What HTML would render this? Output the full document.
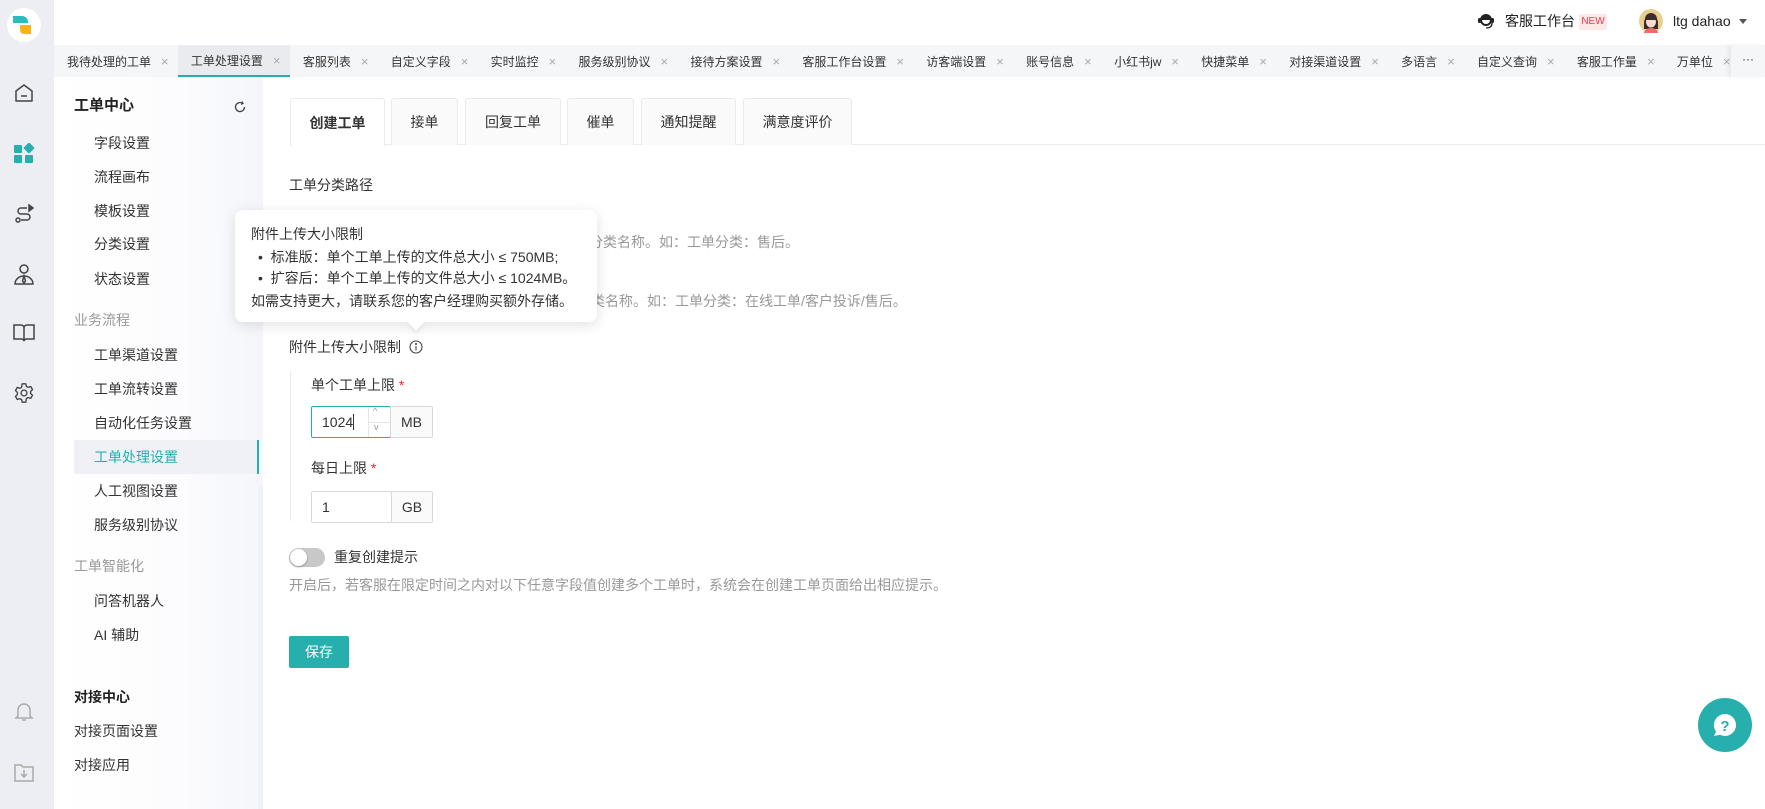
<!DOCTYPE html>
<html><head><meta charset="utf-8">
<style>
*{margin:0;padding:0;box-sizing:border-box}
body{width:1765px;height:809px;overflow:hidden;background:#fff;font-family:"Liberation Sans","Noto Sans CJK SC",sans-serif;color:#333;position:relative;font-size:14px}
.abs{position:absolute}
.rail{left:0;top:0;width:54px;height:809px;background:#eceef3}
.tabbar{left:54px;top:45px;width:1711px;height:32px;background:#f5f6f8;display:flex;align-items:center;font-size:12px;color:#333;white-space:nowrap}
.tb{height:32px;display:flex;align-items:center;padding:0 9.3px 0 13px}
.tb i{font-style:normal;color:#aaa;margin-left:10px;font-size:13px}
.tb.act{background:#eaebef;border-bottom:2px solid #26afad}
.side{left:54px;top:77px;width:209px;height:732px;background:linear-gradient(90deg,#fff 0%,#fcfcfe 60%,#f4f6fb 100%)}
.si{position:absolute;left:94px;font-size:14px;color:#333;line-height:20px}
.sg{position:absolute;left:74px;font-size:14px;color:#999;line-height:20px}
.ctab{position:absolute;top:98px;height:47px;border:1px solid #ebebeb;border-bottom:none;background:#fafafa;display:flex;align-items:center;justify-content:center;font-size:14px;color:#333;border-radius:3px 3px 0 0}
.t{position:absolute;line-height:20px;white-space:nowrap}
.g{color:#999}
.inp{position:absolute;height:32px;border:1px solid #d9d9d9;border-radius:2px;font-size:14px}
</style></head><body>
<div class="abs rail"></div>
<div class="abs" style="left:7px;top:8px;width:34px;height:34px;border-radius:50%;background:#fff"></div>
<svg class="abs" style="left:13px;top:16px" width="22" height="18" viewBox="0 0 22 18"><path d="M0 0h9a6 6 0 0 1 6 6v1H0z" fill="#2bbcc0"/><path d="M7 9h11v9h-7a4 4 0 0 1-4-4z" fill="#f9b21a"/></svg>
<svg class="abs" style="left:13px;top:82px" width="22" height="22" viewBox="0 0 22 22" fill="none" stroke="#444" stroke-width="1.5"><path d="M3 9l8-6 8 6v10H3z" stroke-linejoin="round"/><path d="M8 14h6"/></svg>
<svg class="abs" style="left:14px;top:143px" width="21" height="21" viewBox="0 0 21 21" fill="#26afad"><rect x="0" y="2" width="8" height="8" rx="1"/><rect x="11" y="1" width="8" height="8" rx="1" transform="rotate(45 15 5)"/><rect x="0" y="12" width="8" height="8" rx="1"/><rect x="11" y="12" width="8" height="8" rx="1"/></svg>
<svg class="abs" style="left:13px;top:203px" width="22" height="22" viewBox="0 0 22 22" fill="none" stroke="#444" stroke-width="1.5"><path d="M14 5H8a3 3 0 0 0 0 6h6a3 3 0 0 1 0 6H8"/><circle cx="5" cy="17" r="2"/><path d="M16 2l4 3-4 3z" fill="#444"/></svg>
<svg class="abs" style="left:13px;top:263px" width="22" height="24" viewBox="0 0 22 24" fill="none" stroke="#444" stroke-width="1.5"><circle cx="11" cy="6" r="4"/><path d="M2 21a9 8 0 0 1 18 0z"/><path d="M11 13l-1.5 5 1.5 2 1.5-2z"/></svg>
<svg class="abs" style="left:13px;top:323px" width="22" height="20" viewBox="0 0 22 20" fill="none" stroke="#444" stroke-width="1.5"><path d="M1 2h7a3 3 0 0 1 3 3v13a3 3 0 0 0-3-2H1zM21 2h-7a3 3 0 0 0-3 3v13a3 3 0 0 1 3-2h7z"/></svg>
<svg class="abs" style="left:13px;top:382px" width="22" height="22" viewBox="0 0 24 24" fill="none" stroke="#444" stroke-width="1.5"><circle cx="12" cy="12" r="3.2"/><path d="M10 2h4l.6 2.8 2 1.1 2.7-1 2 3.4-2.1 1.9v2.4l2.1 1.9-2 3.4-2.7-1-2 1.1L14 22h-4l-.6-2.8-2-1.1-2.7 1-2-3.4 2.1-1.9v-2.4L2.7 9.3l2-3.4 2.7 1 2-1.1z" stroke-linejoin="round"/></svg>
<svg class="abs" style="left:13px;top:700px" width="22" height="22" viewBox="0 0 22 22" fill="none" stroke="#aaa" stroke-width="1.5"><path d="M5 16V10a6 6 0 0 1 12 0v6l2 2H3z"/><path d="M9 20h4"/></svg>
<svg class="abs" style="left:13px;top:761px" width="22" height="22" viewBox="0 0 22 22" fill="none" stroke="#aaa" stroke-width="1.5"><path d="M2 4h6l2 2h10v14H2z"/><path d="M11 9v7M8 13l3 3 3-3"/></svg>

<svg class="abs" style="left:1477px;top:11px" width="18" height="19" viewBox="0 0 18 19"><circle cx="9" cy="9" r="6" fill="#222"/><rect x="1" y="7" width="3" height="5" rx="1.5" fill="#222"/><rect x="14" y="7" width="3" height="5" rx="1.5" fill="#222"/><path d="M5 9a4 4 0 0 0 8 0" fill="#fff"/><path d="M15 12c0 4-3 5-6 5" stroke="#222" stroke-width="1.3" fill="none"/></svg>
<div class="t" style="left:1505px;top:11px;font-size:14px;color:#222">客服工作台</div>
<div class="abs" style="left:1579px;top:14px;width:28px;height:16px;background:#fde7e7;color:#f0394a;font-size:10px;line-height:16px;text-align:center;border-radius:2px">NEW</div>
<svg class="abs" style="left:1639px;top:9px" width="24" height="24" viewBox="0 0 24 24"><circle cx="12" cy="12" r="12" fill="#e8cf8e"/><path d="M5 14a7 8 0 0 1 14 0v6H5z" fill="#3a2c2a"/><ellipse cx="12" cy="13" rx="5" ry="5.5" fill="#f6ddd0"/><path d="M6 10a6 6 0 0 1 12 0v1H6z" fill="#3a2c2a"/><path d="M5 24a7 5 0 0 1 14 0z" fill="#f06b6b"/></svg>
<div class="t" style="left:1673px;top:11px;font-size:14px;color:#222">ltg dahao</div>
<div class="abs" style="left:1739px;top:19px;width:0;height:0;border-left:4px solid transparent;border-right:4px solid transparent;border-top:5px solid #555"></div>

<div class="abs tabbar">
<div class="tb">我待处理的工单<i>×</i></div>
<div class="tb act">工单处理设置<i>×</i></div>
<div class="tb">客服列表<i>×</i></div>
<div class="tb">自定义字段<i>×</i></div>
<div class="tb">实时监控<i>×</i></div>
<div class="tb">服务级别协议<i>×</i></div>
<div class="tb">接待方案设置<i>×</i></div>
<div class="tb">客服工作台设置<i>×</i></div>
<div class="tb">访客端设置<i>×</i></div>
<div class="tb">账号信息<i>×</i></div>
<div class="tb">小红书jw<i>×</i></div>
<div class="tb">快捷菜单<i>×</i></div>
<div class="tb">对接渠道设置<i>×</i></div>
<div class="tb">多语言<i>×</i></div>
<div class="tb">自定义查询<i>×</i></div>
<div class="tb">客服工作量<i>×</i></div>
<div class="tb">万单位<i>×</i></div>
</div>
<div class="abs" style="left:1731px;top:45px;width:34px;height:32px;background:#f5f6f8;box-shadow:-3px 0 4px rgba(0,0,0,.06);font-size:12px;line-height:28px;text-align:center;color:#333">···</div>

<div class="abs side"></div>
<div class="abs" style="left:259px;top:486px;width:4px;height:323px;background:#eef1f7"></div>
<div class="t" style="left:74px;top:96px;font-size:15px;font-weight:bold;color:#222">工单中心</div>
<svg class="abs" style="left:234px;top:101px" width="12" height="12" viewBox="0 0 12 12" fill="none" stroke="#444" stroke-width="1.3"><path d="M10.5 6A4.5 4.5 0 1 1 8.5 2.3"/><path d="M8 0.5l1 2-2 .8" /></svg>
<div class="si" style="top:133px">字段设置</div>
<div class="si" style="top:167px">流程画布</div>
<div class="si" style="top:201px">模板设置</div>
<div class="si" style="top:234px">分类设置</div>
<div class="si" style="top:269px">状态设置</div>
<div class="sg" style="top:310px">业务流程</div>
<div class="si" style="top:345px">工单渠道设置</div>
<div class="si" style="top:379px">工单流转设置</div>
<div class="si" style="top:413px">自动化任务设置</div>
<div class="abs" style="left:74px;top:440px;width:185px;height:34px;background:#eff1f6;border-right:2px solid #26afad"></div>
<div class="si" style="top:447px;color:#26afad">工单处理设置</div>
<div class="si" style="top:481px">人工视图设置</div>
<div class="si" style="top:515px">服务级别协议</div>
<div class="sg" style="top:556px">工单智能化</div>
<div class="si" style="top:591px">问答机器人</div>
<div class="si" style="top:625px">AI 辅助</div>
<div class="sg" style="top:687px;color:#222;font-weight:bold">对接中心</div>
<div class="sg" style="top:721px;color:#333">对接页面设置</div>
<div class="sg" style="top:755px;color:#333">对接应用</div>

<div class="abs" style="left:290px;top:144px;width:1475px;height:1px;background:#ebebeb"></div>
<div class="ctab" style="left:290px;width:95px;background:#fff;font-weight:bold;height:48px">创建工单</div>
<div class="ctab" style="left:391px;width:67px">接单</div>
<div class="ctab" style="left:465px;width:96px">回复工单</div>
<div class="ctab" style="left:567px;width:67px">催单</div>
<div class="ctab" style="left:641px;width:95px">通知提醒</div>
<div class="ctab" style="left:743px;width:109px">满意度评价</div>

<div class="t" style="left:289px;top:175px">工单分类路径</div>
<div class="t g" style="left:589px;top:232px">分类名称。如：工单分类：售后。</div>
<div class="t g" style="left:591px;top:291px">类名称。如：工单分类：在线工单/客户投诉/售后。</div>

<div class="t" style="left:289px;top:337px">附件上传大小限制</div>
<svg class="abs" style="left:409px;top:340px" width="14" height="14" viewBox="0 0 14 14" fill="none" stroke="#444" stroke-width="1.1"><circle cx="7" cy="7" r="6"/><path d="M7 6v4.5"/><circle cx="7" cy="4" r=".5" fill="#444"/></svg>
<div class="abs" style="left:290px;top:371px;width:1px;height:150px;background:#ebebeb"></div>
<div class="t" style="left:311px;top:375px">单个工单上限 <span style="color:#f5222d">*</span></div>
<div class="inp" style="left:311px;top:406px;width:80px;border-color:#26afad"></div>
<div class="t" style="left:322px;top:412px">1024<span style="display:inline-block;width:1px;height:16px;background:#333;vertical-align:-3px"></span></div>
<div class="abs" style="left:368px;top:407px;width:22px;height:30px;border-left:1px solid #e5e5e5"></div>
<div class="abs" style="left:368px;top:422px;width:22px;height:1px;background:#e5e5e5"></div>
<div class="abs" style="left:373px;top:406px;font-size:9px;color:#999">^</div>
<div class="abs" style="left:374px;top:422px;font-size:9px;color:#999">v</div>
<div class="inp" style="left:390px;top:406px;width:43px;background:#fafafa;text-align:center;line-height:30px">MB</div>
<div class="t" style="left:311px;top:458px">每日上限 <span style="color:#f5222d">*</span></div>
<div class="inp" style="left:311px;top:491px;width:81px;padding-left:10px;line-height:30px">1</div>
<div class="inp" style="left:391px;top:491px;width:42px;background:#fafafa;text-align:center;line-height:30px">GB</div>

<div class="abs" style="left:289px;top:548px;width:36px;height:19px;border-radius:10px;background:#c8c8c8"></div>
<div class="abs" style="left:290px;top:549px;width:17px;height:17px;border-radius:50%;background:#fff;box-shadow:0 1px 2px rgba(0,0,0,.3)"></div>
<div class="t" style="left:334px;top:547px">重复创建提示</div>
<div class="t g" style="left:289px;top:575px">开启后，若客服在限定时间之内对以下任意字段值创建多个工单时，系统会在创建工单页面给出相应提示。</div>
<div class="abs" style="left:289px;top:636px;width:60px;height:32px;background:#26afad;border-radius:2px;color:#fff;text-align:center;line-height:32px">保存</div>

<div class="abs" style="left:235px;top:210px;width:362px;height:112px;background:#fff;border-radius:8px;box-shadow:0 3px 14px rgba(0,0,0,.12)"></div>
<div class="abs" style="left:410px;top:316px;width:12px;height:12px;background:#fff;transform:rotate(45deg);box-shadow:3px 3px 5px rgba(0,0,0,.06)"></div>
<div class="t" style="left:251px;top:224px">附件上传大小限制</div>
<div class="t" style="left:258px;top:247px">•&nbsp; 标准版：单个工单上传的文件总大小 ≤ 750MB;</div>
<div class="t" style="left:258px;top:268px">•&nbsp; 扩容后：单个工单上传的文件总大小 ≤ 1024MB。</div>
<div class="t" style="left:251px;top:291px">如需支持更大，请联系您的客户经理购买额外存储。</div>

<div class="abs" style="left:1698px;top:698px;width:54px;height:54px;border-radius:50%;background:#26afad"></div>
<svg class="abs" style="left:1709px;top:709px" width="32" height="32" viewBox="0 0 32 32"><path d="M16 5a11 11 0 1 1-5 20.8L5 27l2-4.5A11 11 0 0 1 16 5z" fill="#fff"/><text x="16" y="22" text-anchor="middle" font-size="15" font-weight="bold" fill="#26afad" font-family="Liberation Sans">?</text></svg>
</body></html>
